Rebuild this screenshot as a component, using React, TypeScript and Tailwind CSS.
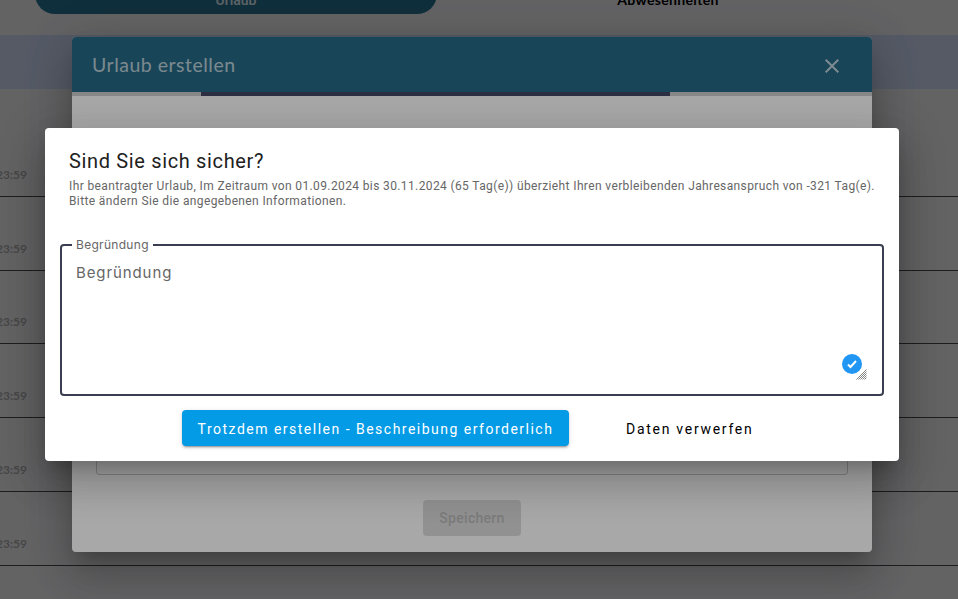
import React from "react";

const times = [0, 1, 2, 3, 4, 5];

export default function App() {
  return (
    <div className="relative h-[599px] w-[958px] overflow-hidden bg-[#dedee1] font-['Roboto',sans-serif]">
      {/* Page beneath */}
      <div className="flex h-[35px] items-start">
        <div className="-mt-[14px] ml-[35px] flex h-[28px] w-[402px] items-center justify-center rounded-b-[20px] bg-[#266a87] text-sm font-medium text-white/80">
          Urlaub
        </div>
        <div className="-mt-[14px] flex h-[28px] flex-1 items-center justify-center font-['Lato',sans-serif] text-sm font-bold tracking-[.35px] text-black">
          <span className="ml-[-59px]">Abwesenheiten</span>
        </div>
      </div>
      <div className="h-[54px] bg-[#bfcbe3]" />
      <div className="flex flex-col pt-[34px]">
        {times.map((t) => (
          <div key={t} className="flex h-[73.8px] shrink-0 items-end border-b border-[#444]">
            <span className="mb-[14px] ml-[-4px] font-['Lato',sans-serif] text-[12px] font-bold leading-[14px] text-[#a0a0a0]">
              23:59
            </span>
          </div>
        ))}
      </div>

      {/* First dialog */}
      <div className="absolute inset-0 flex items-center justify-center bg-black/[.32] pr-[14px] pb-[10px]">
        <div className="flex h-[515px] w-[800px] flex-col overflow-hidden rounded bg-white shadow-[0_11px_15px_-7px_rgba(0,0,0,.2),0_24px_38px_3px_rgba(0,0,0,.14),0_9px_46px_8px_rgba(0,0,0,.12)]">
          <div className="flex h-[55px] shrink-0 items-center justify-between bg-[#266a87] pl-[20px] pr-[28px]">
            <span className="font-['Lato',sans-serif] text-[19.5px] tracking-[.5px] text-white/70">Urlaub erstellen</span>
            <svg width="24" height="24" viewBox="0 0 24 24" fill="#fff" className="mt-[2px] opacity-70">
              <path d="M19 6.41 17.59 5 12 10.59 6.41 5 5 6.41 10.59 12 5 17.59 6.41 19 12 13.41 17.59 19 19 17.59 13.41 12z" />
            </svg>
          </div>
          <div className="h-[4px] shrink-0 bg-[#cfcfcf] pl-[129px] pr-[202px]">
            <div className="h-full bg-[#454a66]" />
          </div>
          <div className="flex flex-1 flex-col items-center px-[24px]">
            <div className="mt-[330px] h-[49px] w-full rounded-b border border-t-0 border-[#ccc]" />
            <div className="mt-[25px] flex h-[36px] w-[98px] items-center justify-center rounded bg-[#dddddd] text-sm font-medium tracking-[.3px] text-[#bbb]">
              Speichern
            </div>
          </div>
        </div>
      </div>

      {/* Confirmation */}
      <div className="absolute inset-0 flex items-center justify-center bg-black/[.34] pr-[14px] pb-[10px]">
        <div className="flex h-[333px] w-[854px] flex-col rounded bg-white pt-[21px] shadow-[0_11px_15px_-7px_rgba(0,0,0,.2),0_24px_38px_3px_rgba(0,0,0,.14),0_9px_46px_8px_rgba(0,0,0,.12)]">
          <h2 className="ml-[24px] text-xl font-normal leading-[24px] tracking-[.65px] text-[#212121]">Sind Sie sich sicher?</h2>
          <p className="ml-[24px] mt-[6px] text-xs leading-[15px] tracking-[.378px] text-[#666]">
            Ihr beantragter Urlaub, Im Zeitraum von 01.09.2024 bis 30.11.2024 (65 Tag(e)) überzieht Ihren verbleibenden Jahresanspruch von -321 Tag(e).
            <br />
            Bitte ändern Sie die angegebenen Informationen.
          </p>
          <fieldset className="relative mx-[15px] mt-[29px] h-[158px] rounded border-2 border-[#3b3e52] px-[14px]">
            <legend className="ml-[-4px] px-[4px] font-['Inter',sans-serif] text-[12px] leading-[14px] tracking-[.3px] text-[#666]">Begründung</legend>
            <textarea
              placeholder="Begründung"
              className="block h-[128px] w-full resize-none bg-transparent pt-[11px] font-['Inter',sans-serif] text-[15px] leading-[20px] tracking-[.9px] text-[#666] outline-none placeholder:text-[#666]"
            />
            <span className="absolute bottom-[6px] right-[20px] flex h-[20px] w-[20px] items-center justify-center rounded-full bg-[#2196f3]">
              <svg width="12" height="12" viewBox="0 0 24 24" fill="none" stroke="#fff" strokeWidth="4">
                <path d="M4 13l5 5 11-12" />
              </svg>
            </span>
            <svg width="11" height="11" viewBox="0 0 11 11" stroke="#777" strokeWidth="0.9" className="absolute bottom-[0px] right-[15px]">
              <path d="M0.5 10.5 10.5 0.5M2.5 10.5 10.5 2.5M4.5 10.5 10.5 4.5M6.5 10.5 10.5 6.5M8.5 10.5 10.5 8.5" />
            </svg>
          </fieldset>
          <div className="ml-[137px] mt-[14px] flex items-center">
            <button className="flex h-[36px] w-[387px] items-center justify-center rounded bg-[#039be5] pt-[1px] text-sm tracking-[1.49px] text-white shadow-[0_3px_1px_-2px_rgba(0,0,0,.2),0_2px_2px_0_rgba(0,0,0,.14),0_1px_5px_0_rgba(0,0,0,.12)]">
              Trotzdem erstellen - Beschreibung erforderlich
            </button>
            <button className="ml-[57px] pt-[1px] text-sm tracking-[1.72px] text-black">Daten verwerfen</button>
          </div>
        </div>
      </div>
    </div>
  );
}
